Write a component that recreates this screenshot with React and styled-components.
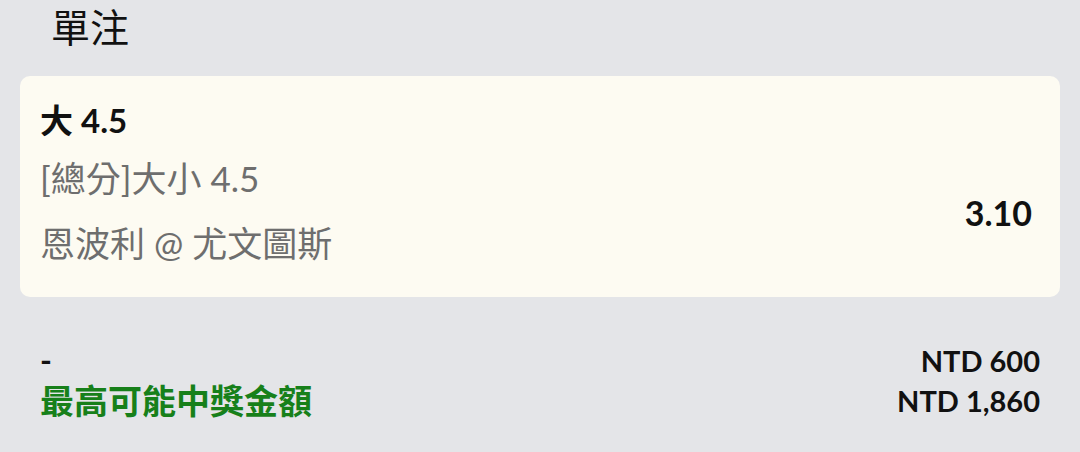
import React from 'react';
import styled, { createGlobalStyle } from 'styled-components';

const GlobalStyle = createGlobalStyle`
  html, body {
    margin: 0;
    padding: 0;
    background-color: #e4e5e8;
  }
  body {
    font-family: Lato, "Noto Sans CJK TC", sans-serif;
    color: #111;
  }
`;

const Page = styled.div`
  width: 1080px;
  height: 452px;
  overflow: hidden;
  display: flex;
  flex-direction: column;
`;

const Header = styled.h1`
  margin: 0;
  padding: 3px 0 0 51px;
  height: 76px;
  box-sizing: border-box;
  font-size: 39px;
  font-weight: 400;
  line-height: 48px;
  color: #111;
`;

const Card = styled.div`
  margin: 0 20px;
  height: 221px;
  box-sizing: border-box;
  padding: 20px 28px 20px 20px;
  background-color: #fdfbf2;
  border-radius: 10px;
  display: flex;
  align-items: center;
`;

const Details = styled.div`
  flex: 1;
  align-self: flex-start;
  display: flex;
  flex-direction: column;
`;

const Selection = styled.div`
  font-size: 33px;
  font-weight: 700;
  line-height: 48px;
  color: #111;
`;

const Info = styled.div`
  margin-top: ${props => props.$gap}px;
  font-size: 35px;
  font-weight: 400;
  line-height: 50px;
  color: #6e6e6e;
`;

const Odds = styled.div`
  margin-top: 52px;
  font-size: 34px;
  font-weight: 700;
  color: #111;
`;

const Summary = styled.div`
  padding: 44px 40px 0 40px;
  display: flex;
  justify-content: space-between;
  align-items: flex-start;
`;

const Column = styled.div`
  display: flex;
  flex-direction: column;
  align-items: ${props => (props.$end ? 'flex-end' : 'flex-start')};
`;

const Label = styled.div`
  font-size: ${props => (props.$highlight ? 34 : 32)}px;
  font-weight: 700;
  line-height: ${props => (props.$highlight ? 44 : 38)}px;
  color: ${props => (props.$highlight ? '#17801a' : '#111')};
`;

const Amount = styled.div`
  font-size: 29px;
  font-weight: 700;
  line-height: 40px;
  color: #111;
`;

export default function App() {
  return (
    <Page>
      <GlobalStyle />
      <Header>單注</Header>
      <Card>
        <Details>
          <Selection>大 4.5</Selection>
          <Info $gap={9}>[總分]大小 4.5</Info>
          <Info $gap={15}>恩波利 @ 尤文圖斯</Info>
        </Details>
        <Odds>3.10</Odds>
      </Card>
      <Summary>
        <Column>
          <Label>-</Label>
          <Label $highlight>最高可能中獎金額</Label>
        </Column>
        <Column $end>
          <Amount>NTD 600</Amount>
          <Amount>NTD 1,860</Amount>
        </Column>
      </Summary>
    </Page>
  );
}
